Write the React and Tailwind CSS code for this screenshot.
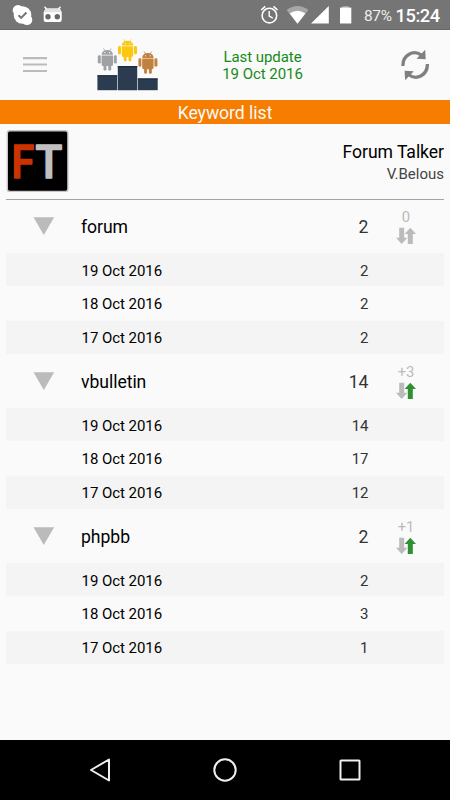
import React from 'react';

const keywords = [
  {
    name: 'forum',
    rank: 2,
    change: '0',
    up: false,
    history: [
      ['19 Oct 2016', 2],
      ['18 Oct 2016', 2],
      ['17 Oct 2016', 2],
    ],
  },
  {
    name: 'vbulletin',
    rank: 14,
    change: '+3',
    up: true,
    history: [
      ['19 Oct 2016', 14],
      ['18 Oct 2016', 17],
      ['17 Oct 2016', 12],
    ],
  },
  {
    name: 'phpbb',
    rank: 2,
    change: '+1',
    up: true,
    history: [
      ['19 Oct 2016', 2],
      ['18 Oct 2016', 3],
      ['17 Oct 2016', 1],
    ],
  },
];

const StatusBar = () => (
  <div className="flex h-[30px] items-center justify-between border-b border-[#666] bg-[#757575] text-white">
    <svg width="70" height="29" viewBox="0 0 70 29">
      <circle cx="22.5" cy="15" r="8.8" fill="#fff" />
      <circle cx="18" cy="10.3" r="5.3" fill="#fff" />
      <circle cx="27" cy="19.7" r="5.3" fill="#fff" />
      <path d="M18.5 15.2l2.7 2.7 5.2-5.4" fill="none" stroke="#757575" strokeWidth="2" />
      <path d="M45 7.2l2.5 3M60 7.2l-2.5 3" stroke="#fff" strokeWidth="1.5" strokeLinecap="round" />
      <path d="M45.5 8.5h14.5l1.7 4v7.5q0 2-2 2h-14q-2 0-2-2v-7.5z" fill="#fff" />
      <path d="M43.6 12.2l2-3.7h14.2l2 3.7z" fill="#e2e2e2" />
      <circle cx="48" cy="16.7" r="2.7" fill="#666" />
      <circle cx="57.3" cy="16.7" r="2.7" fill="#666" />
    </svg>
    <div className="flex items-center">
      <svg width="114" height="29" viewBox="250 0 114 29">
        <g fill="none" stroke="#fff" strokeWidth="1.6">
          <circle cx="269.4" cy="15.6" r="7.3" />
          <path d="M269.2 11v5l3.6 2.2" strokeWidth="1.4" />
          <path d="M261.2 10l4-3.6M277.5 10l-4-3.6" />
        </g>
        <path d="M286.6 9.9Q297.5 2 308.4 9.9L297.5 23.7z" fill="#a6a6a6" />
        <path d="M289.7 13.6Q297.5 8 305.3 13.6L297.5 23.7z" fill="#fff" />
        <path d="M311 23.5L328.8 6v17.5z" fill="#fff" />
        <path d="M342.5 6h6v2h-6z" fill="#a6a6a6" />
        <rect x="340" y="7.5" width="11.3" height="16" rx=".6" fill="#fff" />
      </svg>
      <span className="mt-[3px] w-[31.5px] text-[15.4px] leading-5 tracking-[-0.3px] text-[#eee]">87%</span>
      <span className="mt-[3px] w-[54.5px] text-[18.3px] leading-5 font-medium tracking-[-0.45px]">15:24</span>
    </div>
  </div>
);

const Robot = ({ x, y, color }) => (
  <g transform={`translate(${x} ${y})`} fill={color}>
    <path d="M5.7.3l1.4 2.2M13.3.3l-1.4 2.2" stroke={color} strokeWidth=".8" />
    <path d="M3.8 6.6C4 3.7 6 1.8 9.5 1.8S15 3.7 15.2 6.6z" />
    <path d="M3.8 7.3h11.4v9q0 1.6-1.6 1.6H5.4q-1.6 0-1.6-1.6z" />
    <rect x="0" y="7" width="3" height="8.4" rx="1.4" />
    <rect x="16" y="7" width="3" height="8.4" rx="1.4" />
    <rect x="5.7" y="16.5" width="2.9" height="6" rx="1.4" />
    <rect x="10.5" y="16.5" width="2.9" height="6" rx="1.4" />
    <circle cx="7.2" cy="4.5" r=".6" fill="#fff" />
    <circle cx="11.8" cy="4.5" r=".6" fill="#fff" />
  </g>
);

const Podium = () => (
  <svg width="62" height="54" viewBox="97 38 62 54">
    <Robot x={97.8} y={48.2} color="#a0a1a5" />
    <Robot x={118} y={39} color="#fbc80f" />
    <Robot x={138.4} y={51.3} color="#c2823f" />
    <g fill="#2c3c50">
      <path d="M97.4 75.3h19.8v14.9H97.4z" />
      <path d="M117.8 66h19.4v24.2h-19.4z" />
      <path d="M137.8 78.4h19.9v11.8h-19.9z" />
      <path d="M97.4 75.3h19.8v1H97.4zM117.8 66h19.4v1.2h-19.4zM137.8 78.4h19.9v1h-19.9z" fill="#142a42" />
    </g>
  </svg>
);

const Header = () => (
  <div className="flex h-[70px] items-start">
    <svg className="mt-[26px] ml-[23px]" width="24" height="18" viewBox="0 0 24 18" fill="#bbb">
      <path d="M0 1h24v2.2H0zM0 7.4h24v2.2H0zM0 13.9h24v2.2H0z" />
    </svg>
    <div className="mt-2 ml-[50px] w-[62px]">
      <Podium />
    </div>
    <div className="mt-[19px] ml-[53.5px] w-[100px] text-center text-[15px] leading-[17.3px] tracking-[-0.05px] text-[#158a18]">
      Last update
      <br />
      19 Oct 2016
    </div>
    <svg className="mt-[19px] ml-[87.5px]" width="30" height="32" viewBox="400 49 30 32">
      <g fill="none" stroke="#808080" strokeWidth="3.3">
        <path d="M402.9 66C402.6 55 413.5 49.2 421.5 55.2" />
        <path d="M427.4 64C427.6 75 416.8 80.8 408.8 74.8" />
      </g>
      <path d="M425.2 49.8l.5 9.4-9.2-.5z" fill="#808080" />
      <path d="M405.1 80.2l-.5-9.4 9.2.5z" fill="#808080" />
    </svg>
  </div>
);

const AppInfo = () => (
  <div className="mx-1.5 flex h-[75px] justify-between">
    <svg className="mt-[6px]" width="63" height="63" viewBox="6 130 63 63">
      <rect x="7.3" y="130.8" width="60.6" height="60.6" rx="2.5" fill="#000" stroke="#c8c4c8" strokeWidth="1.4" />
      <g fontWeight="500" fontSize="47" strokeWidth="1.6" strokeLinejoin="round">
        <text x="11.6" y="178" textLength="22.8" lengthAdjust="spacingAndGlyphs" fill="#cc3300" stroke="#cc3300">F</text>
        <text x="35.4" y="178" textLength="26.8" lengthAdjust="spacingAndGlyphs" fill="#c0c0c0" stroke="#c0c0c0">T</text>
      </g>
    </svg>
    <div className="mt-[17px] text-right">
      <div className="text-[17.6px] leading-[22px] tracking-[-0.05px] text-black">Forum Talker</div>
      <div className="text-[15px] leading-[22px] text-[#444]">V.Belous</div>
    </div>
  </div>
);

const Trend = ({ change, up }) => (
  <div className="ml-[13.5px] flex w-12 flex-col items-center">
    <span className="mt-[2px] text-[14.8px] leading-[17px] text-[#bbb]">{change}</span>
    <svg className="mt-px" width="20" height="18" viewBox="0 0 20 18">
      <path d="M3.2.8h5v10h3.2L5.7 16.9 0 10.8h3.2z" fill="#bbb" />
      <path d="M11.8 17.1h5v-10H20L14.3.8 8.6 7.1h3.2z" fill={up ? '#2e8f33' : '#bbb'} />
    </svg>
  </div>
);

const KeywordGroup = ({ keyword }) => (
  <div className="mx-1.5">
    <div className="flex h-[54px] items-center">
      <svg className="ml-[27px]" width="22" height="20" viewBox="0 0 22 20">
        <path d="M.5 1.2h20.7L10.8 19z" fill="#bbb" />
      </svg>
      <span className="mt-[2px] ml-[26px] flex-1 text-[17.6px] tracking-[-0.05px] text-black">{keyword.name}</span>
      <span className="mt-[2px] text-[17.6px] text-[#333]">{keyword.rank}</span>
      <Trend change={keyword.change} up={keyword.up} />
      <div className="w-[14px]" />
    </div>
    <div className="grid h-[101px] grid-rows-[33px_35px_33px]">
      {keyword.history.map(([date, rank]) => (
        <div key={date} className="flex items-center justify-between pt-[2px] pr-[75.5px] pl-[75.5px] first:pt-[4px] odd:bg-[#f4f4f4]">
          <span className="text-[15px] tracking-[-0.05px] text-black">{date}</span>
          <span className="text-[15px] text-[#333]">{rank}</span>
        </div>
      ))}
    </div>
  </div>
);

const NavBar = () => (
  <div className="flex h-[60px] items-center justify-center bg-black">
    <svg width="280" height="30" viewBox="85 755 280 30" fill="none" stroke="#eee" strokeWidth="2" strokeLinejoin="round">
      <path d="M109 759.5v21L91 770z" />
      <circle cx="225" cy="770" r="10.7" />
      <rect x="340.5" y="760.5" width="19" height="19" rx=".5" />
    </svg>
  </div>
);

const App = () => {
  return (
    <div className="flex h-[800px] w-[450px] flex-col overflow-hidden bg-[#fafafa] font-[Roboto,sans-serif]">
      <StatusBar />
      <Header />
      <div className="h-6 bg-[#f77d00] text-center text-[17.6px] leading-[26px] tracking-[-0.03px] text-[#fafafa]">Keyword list</div>
      <AppInfo />
      <div className="mx-1.5 h-px shrink-0 bg-[#a4a4a4]" />
      <div className="-mt-px flex-1">
        {keywords.map((keyword) => (
          <KeywordGroup key={keyword.name} keyword={keyword} />
        ))}
      </div>
      <NavBar />
    </div>
  );
};

export default App;
